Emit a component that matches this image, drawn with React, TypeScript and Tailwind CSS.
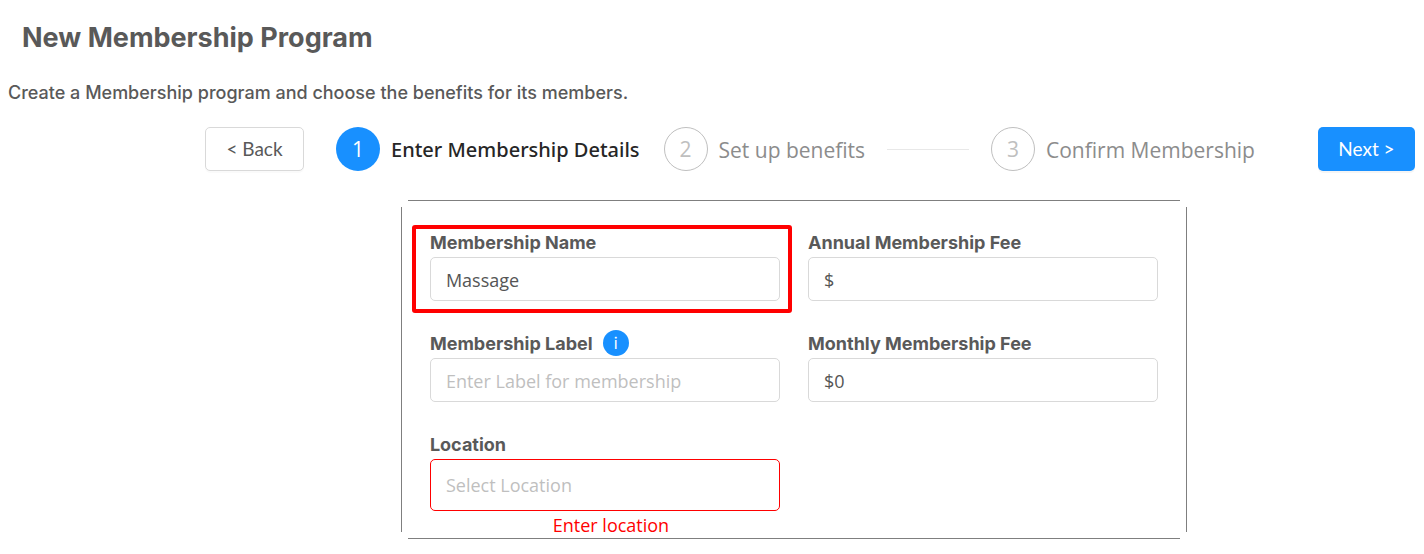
import type { ReactNode } from 'react'

const steps = ['Enter Membership Details', 'Set up benefits', 'Confirm Membership']

const inputClass =
  "h-11 w-full rounded-[5px] border border-[#d9d9d9] bg-white px-[15px] pt-0.5 font-['Open_Sans',sans-serif] text-lg text-[#555] outline-none placeholder:text-[#bfbfbf]"

function Step({ index, title, active }: { index: number; title: string; active: boolean }) {
  const last = index === steps.length - 1

  return (
    <li
      aria-current={active ? 'step' : undefined}
      className="flex min-w-0 items-center overflow-hidden font-['Open_Sans',sans-serif] text-[21px]"
    >
      <span
        className={
          active
            ? 'flex size-11 shrink-0 items-center justify-center rounded-full bg-[#1890ff] pt-0.5 text-white'
            : 'flex size-11 shrink-0 items-center justify-center rounded-full border border-[#bfbfbf] pt-0.5 text-[#bfbfbf]'
        }
      >
        {index + 1}
      </span>
      <span
        className={
          active
            ? "ml-[11px] pt-0.5 font-['Noto_Sans',sans-serif] text-xl font-medium whitespace-nowrap text-[#262626]"
            : 'ml-[11px] pt-1 whitespace-nowrap text-[#8c8c8c]'
        }
      >
        {title}
      </span>
      {!last && <span className="ml-[22px] h-px flex-1 bg-[#e8e8e8]" />}
    </li>
  )
}

function Field({ id, label, hint, children }: { id: string; label: string; hint?: ReactNode; children: ReactNode }) {
  return (
    <div className="relative">
      <div className="flex h-7 items-center">
        <label htmlFor={id} className="text-lg font-bold">
          {label}
        </label>
        {hint}
      </div>
      {children}
    </div>
  )
}

export default function App() {
  return (
    <main className="bg-white pb-4 font-[Inter,sans-serif] text-[#595959]">
      <h1 className="px-[22px] pt-5 text-[27px] leading-9 font-bold">New Membership Program</h1>
      <p className="mt-[25px] px-2 text-lg leading-6 font-medium">
        Create a Membership program and choose the benefits for its members.
      </p>

      <section className="mt-[22px] mr-[9px] ml-[173px]">
        <div className="flex items-center gap-8 pl-8">
          <button
            type="button"
            className="h-11 w-[99px] shrink-0 rounded-[5px] border border-[#d9d9d9] bg-white font-[Lato,sans-serif] text-[19px] shadow-[0_2px_0_rgba(0,0,0,0.02)]"
          >
            &lt; Back
          </button>
          <ol className="grid min-w-0 flex-1 grid-cols-[1fr_1fr_295px] gap-x-[22px]">
            {steps.map((title, i) => (
              <Step key={title} index={i} title={title} active={i === 0} />
            ))}
          </ol>
          <button
            type="button"
            className="h-11 w-[97px] shrink-0 rounded-[5px] bg-[#1890ff] font-[Lato,sans-serif] text-[19px] text-white shadow-[0_2px_0_rgba(0,0,0,0.04)]"
          >
            Next &gt;
          </button>
        </div>

        {/* borders stop short of the corners */}
        <form className="relative mx-auto mt-[29px] w-[63.3%] px-[29px] pt-[29px] before:pointer-events-none before:absolute before:inset-x-[7px] before:inset-y-0 before:border-y before:border-[#7f7f7f] after:pointer-events-none after:absolute after:inset-x-0 after:inset-y-[7px] after:border-x after:border-[#7f7f7f]">
          <div className="grid grid-cols-2 gap-x-7 gap-y-[29px]">
            <Field id="name" label="Membership Name">
              <input id="name" type="text" defaultValue="Massage" className={inputClass} />
              <span className="pointer-events-none absolute -top-1 -right-3 -bottom-3 -left-[18px] rounded-[3px] border-4 border-[#ff0000]" />
            </Field>
            <Field id="annual-fee" label="Annual Membership Fee">
              <input id="annual-fee" type="text" defaultValue="$" className={inputClass} />
            </Field>
            <Field
              id="label"
              label="Membership Label"
              hint={
                <button
                  type="button"
                  aria-label="About membership label"
                  className="mb-0.5 ml-2.5 flex size-[26px] items-center justify-center rounded-full bg-[#1890ff] text-base text-white"
                >
                  i
                </button>
              }
            >
              <input id="label" type="text" placeholder="Enter Label for membership" className={inputClass} />
            </Field>
            <Field id="monthly-fee" label="Monthly Membership Fee">
              <input id="monthly-fee" type="text" defaultValue="$0" className={inputClass} />
            </Field>
            <Field id="location" label="Location">
              <select
                id="location"
                defaultValue=""
                aria-invalid
                aria-describedby="location-error"
                className="block h-[52px] w-full appearance-none rounded-[5px] border border-[#ff0000] bg-white px-[15px] font-['Open_Sans',sans-serif] text-lg text-[#bfbfbf] outline-none"
              >
                <option value="">Select Location</option>
              </select>
              <p
                id="location-error"
                className="pl-3 text-center font-['Open_Sans',sans-serif] text-lg leading-7 text-[#ff0000]"
              >
                Enter location
              </p>
            </Field>
          </div>
        </form>
      </section>
    </main>
  )
}
